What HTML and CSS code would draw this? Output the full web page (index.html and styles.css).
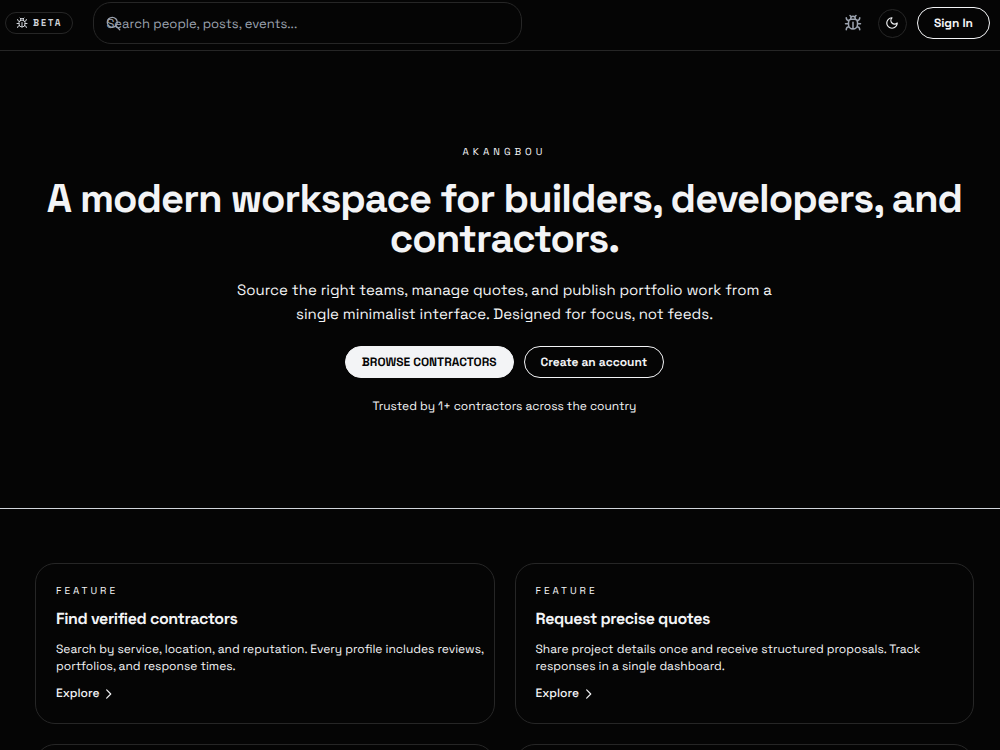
FILE: index.html
```html
<!DOCTYPE html>
<html lang="en">
<head>
<meta charset="utf-8">
<meta name="viewport" content="width=device-width, initial-scale=1">
<title>Akangbou</title>
<link rel="stylesheet" href="styles.css">
</head>
<body>
<svg class="sprite" aria-hidden="true">
  <symbol id="bug" viewBox="0 0 24 24"><path d="M12 20v-9M14 7a4 4 0 0 1 4 4v3a6 6 0 0 1-12 0v-3a4 4 0 0 1 4-4zM14.12 3.88 16 2M21 21a4 4 0 0 0-3.81-4M21 5a4 4 0 0 1-3.55 3.97M22 13h-4M3 21a4 4 0 0 1 3.81-4M3 5a4 4 0 0 0 3.55 3.97M6 13H2M8 2l1.88 1.88M9 7.13V6a3 3 0 1 1 6 0v1.13"/></symbol>
  <symbol id="search" viewBox="0 0 24 24"><circle cx="10" cy="10" r="8"/><path d="m22 22-6.3-6.3"/></symbol>
  <symbol id="moon" viewBox="0 0 24 24"><path d="M12 3a6 6 0 0 0 9 9 9 9 0 1 1-9-9Z"/></symbol>
  <symbol id="chevron" viewBox="0 0 24 24"><path d="m8 5 7 7-7 7"/></symbol>
</svg>
<header class="topbar">
  <button class="beta" type="button"><svg class="icon icon-small"><use href="#bug"/></svg>BETA</button>
  <form class="search" role="search">
    <svg class="icon search-icon"><use href="#search"/></svg>
    <input class="search-input" type="search" aria-label="Search" placeholder="Search people, posts, events...">
  </form>
  <div class="actions">
    <button class="report" type="button" aria-label="Report a bug"><svg class="icon icon-large"><use href="#bug"/></svg></button>
    <button class="theme" type="button" aria-label="Toggle theme"><svg class="icon"><use href="#moon"/></svg></button>
    <a class="pill" href="#">Sign In</a>
  </div>
</header>
<main>
  <section class="hero">
    <p class="eyebrow">AKANGBOU</p>
    <h1 class="title">A modern workspace for builders, developers, and contractors.</h1>
    <p class="lead">Source the right teams, manage quotes, and publish portfolio work from a single minimalist interface. Designed for focus, not feeds.</p>
    <div class="cta">
      <a class="pill pill-filled" href="#">BROWSE CONTRACTORS</a>
      <a class="pill" href="#">Create an account</a>
    </div>
    <p class="trust">Trusted by 1+ contractors across the country</p>
  </section>
  <section class="features">
    <article class="card">
      <p class="eyebrow">FEATURE</p>
      <h2 class="card-title">Find verified contractors</h2>
      <p class="card-text">Search by service, location, and reputation. Every profile includes reviews, portfolios, and response times.</p>
      <a class="explore" href="#">Explore<svg class="icon"><use href="#chevron"/></svg></a>
    </article>
    <article class="card">
      <p class="eyebrow">FEATURE</p>
      <h2 class="card-title">Request precise quotes</h2>
      <p class="card-text">Share project details once and receive structured proposals. Track responses in a single dashboard.</p>
      <a class="explore" href="#">Explore<svg class="icon"><use href="#chevron"/></svg></a>
    </article>
    <article class="card"></article>
    <article class="card"></article>
  </section>
</main>
</body>
</html>
```
FILE: styles.css
```css
:root {
  --bg: #050505;
  --text: #f3f4f6;
  --muted: #9ca3af;
  --line: #262626;
}
* { box-sizing: border-box; }
html { scrollbar-width: none; }
body {
  margin: 0;
  background: var(--bg);
  color: var(--text);
  font: 400 12px/17px "Space Grotesk", Inter, sans-serif;
  text-rendering: geometricPrecision;
}
h1, h2, p { margin: 0; }
a { color: inherit; text-decoration: none; }
button {
  background: none;
  border: 0;
  padding: 0;
  color: inherit;
  font: inherit;
  cursor: pointer;
}
.sprite { position: absolute; width: 0; height: 0; }
.icon {
  width: 14px;
  height: 14px;
  flex: none;
  fill: none;
  stroke: currentColor;
  stroke-width: 2;
  stroke-linecap: round;
  stroke-linejoin: round;
}
.icon-small { width: 12px; height: 12px; }
.icon-large { width: 18px; height: 18px; }

.topbar {
  display: flex;
  align-items: center;
  gap: 20px;
  padding: 2px 10px 6px 5px;
  border-bottom: 1px solid var(--line);
}
.beta {
  display: flex;
  align-items: center;
  gap: 5px;
  height: 22px;
  padding: 0 10px;
  border: 1px solid var(--line);
  border-radius: 11px;
  color: #d1d5db;
  font-size: 9px;
  font-weight: 700;
  letter-spacing: 2px;
}
.search {
  position: relative;
  flex: 0 1 429px;
}
.search-icon {
  position: absolute;
  top: 14px;
  left: 13px;
  width: 15px;
  height: 15px;
  color: var(--muted);
}
.search-input {
  display: block;
  width: 100%;
  height: 42px;
  padding: 0 12px;
  background: transparent;
  border: 1px solid var(--line);
  border-radius: 18px;
  color: var(--text);
  font: inherit;
  font-size: 13px;
  text-rendering: inherit;
}
.search-input::placeholder { color: var(--muted); opacity: 1; }
.actions {
  display: flex;
  align-items: center;
  gap: 10px;
  margin-left: auto;
}
.report, .theme {
  display: grid;
  place-items: center;
  width: 29px;
  height: 29px;
}
.report { color: var(--muted); }
.theme { border: 1px solid var(--line); border-radius: 50%; }

.pill {
  display: inline-flex;
  align-items: center;
  height: 32px;
  padding: 0 16px;
  border: 1px solid var(--text);
  border-radius: 16px;
  font-weight: 600;
}
.pill-filled { background: var(--text); color: var(--bg); }

.hero {
  display: flex;
  flex-direction: column;
  align-items: center;
  padding: 93px 26px 93px 35px;
  border-bottom: 1px solid #d1d5db;
  text-align: center;
}
.eyebrow {
  font-size: 10px;
  line-height: 16px;
  letter-spacing: 3px;
}
.hero .eyebrow { letter-spacing: 4px; }
.title {
  margin-top: 19px;
  font-size: 40px;
  line-height: 40px;
  font-weight: 600;
  letter-spacing: -1px;
}
.lead {
  max-width: 560px;
  margin-top: 20px;
  font-size: 15px;
  line-height: 24px;
}
.cta { display: flex; gap: 10px; margin-top: 19px; }
.trust { margin-top: 20px; }

.features {
  display: grid;
  grid-template-columns: 1fr 1fr;
  gap: 20px;
  padding: 54px 26px 54px 35px;
}
.card {
  min-height: 161px;
  padding: 19px 8px 19px 20px;
  border: 1px solid var(--line);
  border-radius: 20px;
}
.card-title {
  margin-top: 9px;
  font-size: 16px;
  line-height: 22px;
  font-weight: 600;
  letter-spacing: -0.025em;
}
.card-text { margin-top: 11px; }
.explore {
  display: inline-flex;
  align-items: center;
  gap: 3px;
  margin-top: 10px;
  font-weight: 500;
}
```
